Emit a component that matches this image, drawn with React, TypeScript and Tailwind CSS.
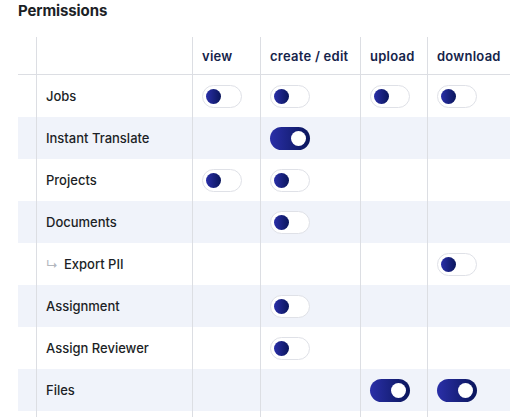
import React from "react";

type Perm = { label: string; sub?: boolean; cells: (null | boolean)[] };

const rows: Perm[] = [
  { label: "Jobs", cells: [false, false, false, false] },
  { label: "Instant Translate", cells: [null, true, null, null] },
  { label: "Projects", cells: [false, false, null, null] },
  { label: "Documents", cells: [null, false, null, null] },
  { label: "Export PII", sub: true, cells: [null, null, null, false] },
  { label: "Assignment", cells: [null, false, null, null] },
  { label: "Assign Reviewer", cells: [null, false, null, null] },
  { label: "Files", cells: [null, null, true, true] },
];

const headers = ["view", "create / edit", "upload", "download"];

function Toggle({ on }: { on: boolean }) {
  if (on) {
    return (
      <div className="relative w-[40px] h-[23px] rounded-full bg-gradient-to-r from-[#2a2fa8] to-[#0a165c]">
        <div className="absolute right-[4px] top-[4px] w-[15px] h-[15px] rounded-full bg-white" />
      </div>
    );
  }
  return (
    <div className="relative w-[40px] h-[23px] rounded-full bg-white border border-[#dfe1e7]">
      <div className="absolute left-[3px] top-[3px] w-[15px] h-[15px] rounded-full bg-gradient-to-r from-[#2a2fa8] to-[#0a165c]" />
    </div>
  );
}

const grid = "grid grid-cols-[18px_156px_68px_100px_67px_83px]";

export default function App() {
  return (
    <div className="w-[525px] h-[417px] overflow-hidden bg-white font-['Inter',sans-serif]">
      <div className="pl-[18px] pt-[1px] h-[37px]">
        <h1 className="text-[15px] leading-[20px] font-bold text-[#1c1f26] tracking-[-0.1px]">Permissions</h1>
      </div>
      <div className="pl-[18px]">
        <div className={`${grid} h-[38px] border-b border-[#dcdee3] w-[492px]`}>
          <div />
          <div className="border-l border-[#dcdee3]" />
          {headers.map((h) => (
            <div key={h} className="border-l border-[#dcdee3] flex items-center pl-[9px] pt-[2px] text-[13px] font-semibold tracking-[0.25px] text-[#15234a]">
              {h}
            </div>
          ))}
        </div>
        {rows.map((r, i) => (
          <div key={r.label} className={`${grid} h-[42px] w-[492px] ${i % 2 === 1 ? "bg-[#f0f3fa]" : "bg-white"}`}>
            <div />
            <div className="border-l border-[#dcdee3] flex items-center pl-[9px] pt-[2px] text-[13px] font-medium text-[#1c1f26]">
              {r.sub && <span className="text-[#b3b7be] mr-[6px] text-[12px]">↳</span>}
              {r.label}
            </div>
            {r.cells.map((c, j) => (
              <div key={j} className="border-l border-[#dcdee3] flex items-center pl-[9px]">
                {c !== null && <Toggle on={c} />}
              </div>
            ))}
          </div>
        ))}
        <div className={`${grid} h-[10px] w-[492px]`}>
          <div />
          <div className="border-l border-[#dcdee3]" />
          <div className="border-l border-[#dcdee3]" />
          <div className="border-l border-[#dcdee3]" />
          <div className="border-l border-[#dcdee3]" />
          <div className="border-l border-[#dcdee3]" />
        </div>
      </div>
    </div>
  );
}
